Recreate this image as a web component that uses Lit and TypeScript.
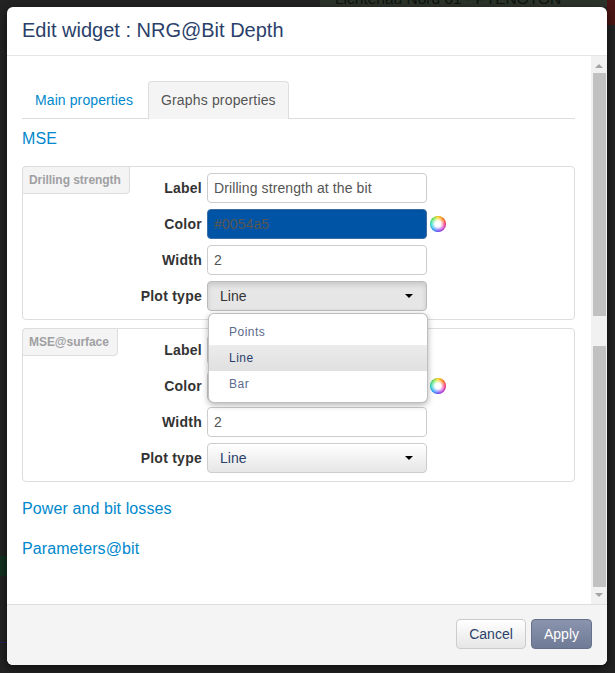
import { LitElement, html, css, nothing } from 'lit';
import { customElement } from 'lit/decorators.js';

@customElement('graph-fields')
class GraphFields extends LitElement {
    static properties = {
        legend: {},
        label: {},
        color: {},
        open: { type: Boolean },
    };
    legend = '';
    label = '';
    color = '';
    open = false;

    static styles = css`
        :host {
            display: block;
        }
        .box {
            position: relative;
            height: 146px;
            border: 1px solid #ddd;
            border-radius: 4px;
            padding: 6px 0 0 184px;
            box-sizing: content-box;
        }
        .legend {
            position: absolute;
            left: -1px;
            top: -1px;
            height: 26px;
            padding: 0 8px 0 6px;
            background: #f4f4f4;
            border: 1px solid #ddd;
            border-radius: 4px 0 4px 0;
            color: #a0a0a3;
            font-size: 12px;
            font-weight: bold;
            letter-spacing: -0.05px;
            line-height: 26px;
        }
        .row {
            display: flex;
            align-items: center;
            height: 30px;
            margin-bottom: 6px;
        }
        .row label {
            width: 110px;
            margin-left: -110px;
            padding-right: 5px;
            box-sizing: border-box;
            text-align: right;
            font-size: 14px;
            font-weight: bold;
            letter-spacing: 0.25px;
            color: #333;
        }
        .input {
            width: 220px;
            height: 30px;
            box-sizing: border-box;
            padding: 0 6px;
            border: 1px solid #ccc;
            border-radius: 4px;
            background: #fff;
            font-size: 14px;
            letter-spacing: 0.1px;
            line-height: 28px;
            color: #555;
        }
        .swatch {
            color: #5a5650;
            border-color: #3a6ea5;
            box-shadow: inset 0 1px 1px rgba(0, 0, 0, 0.08);
        }
        .wheel {
            width: 16px;
            height: 16px;
            margin-left: 3px;
            border-radius: 50%;
            background:
                radial-gradient(circle, #fff 0, #fff 25%, rgba(255, 255, 255, 0) 70%),
                conic-gradient(#ffd400, #ff6a00, #ff1f6b, #c026d3, #5b3bff, #18a0ff, #19e0c0, #4ee44e, #ffd400);
            box-shadow: inset 0 0 1px rgba(0, 0, 0, 0.4);
        }
        .select {
            display: flex;
            align-items: center;
            justify-content: space-between;
            width: 220px;
            height: 30px;
            box-sizing: border-box;
            padding: 0 13px 0 12px;
            border: 1px solid #ccc;
            border-radius: 4px;
            background: linear-gradient(#fff, #e6e6e6);
            color: #2b3f6b;
            font-size: 14px;
        }
        .select.open {
            background: #e6e6e6;
            color: #333;
            box-shadow: inset 0 3px 5px rgba(0, 0, 0, 0.125);
            border-color: #bbb;
        }
        .caret {
            width: 0;
            height: 0;
            border-left: 4px solid transparent;
            border-right: 4px solid transparent;
            border-top: 4px solid #000;
        }
        .menu {
            position: absolute;
            left: 185px;
            top: 146px;
            z-index: 5;
            width: 220px;
            height: 90px;
            box-sizing: border-box;
            padding: 5px 0;
            background: #fff;
            border: 1px solid rgba(0, 0, 0, 0.25);
            border-radius: 6px;
            box-shadow: 0 2px 6px rgba(0, 0, 0, 0.3);
            color: #5b6b8c;
            font-size: 12px;
            letter-spacing: 0.5px;
        }
        .menu div {
            height: 26px;
            padding-left: 20px;
            line-height: 27px;
        }
        .menu .active {
            background: linear-gradient(#ececec, #e0e0e0);
            color: #2b3f6b;
        }
    `;

    render() {
        return html`
            <div class="box">
                <div class="legend">${this.legend}</div>
                <div class="row"><label>Label</label><div class="input">${this.label}</div></div>
                <div class="row">
                    <label>Color</label>
                    ${this.color
                        ? html`<div class="input swatch" style="background:${this.color}">${this.color}</div>`
                        : html`<div class="input"></div>`}
                    <div class="wheel"></div>
                </div>
                <div class="row"><label>Width</label><div class="input">2</div></div>
                <div class="row">
                    <label>Plot type</label>
                    <div class="select ${this.open ? 'open' : ''}"><span>Line</span><span class="caret"></span></div>
                </div>
                ${this.open
                    ? html`<div class="menu">
                          <div>Points</div>
                          <div class="active">Line</div>
                          <div>Bar</div>
                      </div>`
                    : nothing}
            </div>
        `;
    }
}

@customElement('app-root')
export class AppRoot extends LitElement {
    static styles = css`
        :host {
            display: block;
            position: relative;
            width: 615px;
            height: 673px;
            overflow: hidden;
            box-sizing: border-box;
            padding: 7px 8px 8px 7px;
            background: #222;
            font-family: 'Liberation Sans', Arial, sans-serif;
        }
        /* page behind the dialog, only its edges show */
        .top-strip {
            position: absolute;
            left: 320px;
            top: 0;
            width: 295px;
            height: 7px;
            background: #2c332a;
        }
        .behind {
            position: absolute;
            left: 335px;
            top: -10px;
            color: #0e120e;
            font-size: 15.5px;
            white-space: nowrap;
        }
        .red {
            position: absolute;
            right: 0;
            top: 0;
            width: 8px;
            height: 25px;
            background: #4a1414;
        }
        .green {
            position: absolute;
            left: 0;
            top: 556px;
            width: 7px;
            height: 20px;
            background: #12301f;
        }
        .link {
            position: absolute;
            left: 0;
            top: 642px;
            width: 7px;
            height: 1px;
            background: #25215c;
        }
        .modal {
            position: relative;
            display: flex;
            flex-direction: column;
            height: 658px;
            background: #fff;
            border-radius: 6px;
            overflow: hidden;
            box-shadow: 0 3px 9px rgba(0, 0, 0, 0.6);
        }
        .head {
            flex: none;
            height: 49px;
            box-sizing: border-box;
            padding: 0 15px;
            border-bottom: 1px solid #e5e5e5;
            color: #2b3f6b;
            font-size: 20px;
            line-height: 47px;
        }
        .middle {
            flex: 1;
            display: flex;
            min-height: 0;
        }
        .body {
            flex: 1;
            padding: 25px 16px 0 15px;
        }
        .tabs {
            display: flex;
            height: 38px;
            box-sizing: border-box;
            border-bottom: 1px solid #ddd;
            font-size: 14px;
            letter-spacing: 0.1px;
        }
        .tab {
            padding: 0 13px;
            line-height: 38px;
            color: #0088cc;
        }
        .tab.active {
            height: 38px;
            box-sizing: border-box;
            margin-left: 2px;
            padding: 0 12px;
            background: #f4f4f4;
            border: 1px solid #ddd;
            border-bottom: none;
            border-radius: 4px 4px 0 0;
            color: #555;
            letter-spacing: 0.16px;
            line-height: 36px;
        }
        .section {
            font-size: 16px;
            letter-spacing: 0.1px;
            line-height: 20px;
            color: #0088cc;
        }
        .mse {
            margin: 10px 0 17px;
        }
        graph-fields + graph-fields {
            margin-top: 8px;
        }
        .power {
            margin: 17px 0 20px;
        }
        .scroll {
            flex: none;
            display: flex;
            flex-direction: column;
            align-items: center;
            width: 16px;
            background: #f1f1f1;
        }
        .arrow {
            flex: none;
            width: 0;
            height: 0;
            margin: 8px 0 5px;
            border-left: 4px solid transparent;
            border-right: 4px solid transparent;
            border-bottom: 4px solid #a3a3a3;
        }
        .arrow.down {
            margin: 6px 0 7px;
            border-bottom: none;
            border-top: 4px solid #a3a3a3;
        }
        .thumb {
            flex: none;
            width: 13px;
            height: 243px;
            background: #c1c1c1;
        }
        .thumb.lower {
            height: 241px;
            margin-top: 30px;
        }
        .foot {
            flex: none;
            display: flex;
            justify-content: flex-end;
            gap: 5px;
            height: 61px;
            box-sizing: border-box;
            padding: 14px 15px 0 0;
            background: #f4f4f4;
            border-top: 1px solid #ddd;
        }
        .btn {
            height: 30px;
            box-sizing: border-box;
            border-radius: 4px;
            font-size: 14px;
            line-height: 28px;
            text-align: center;
        }
        .cancel {
            width: 70px;
            border: 1px solid #ccc;
            background: linear-gradient(#fff, #e6e6e6);
            color: #2b3f6b;
        }
        .apply {
            width: 61px;
            border: 1px solid #66708a;
            background: linear-gradient(#8a94ad, #6f7a96);
            color: #fff;
        }
    `;

    render() {
        return html`
            <div class="top-strip"></div>
            <div class="behind">Lichtenau Nord 01 - PTENOTON</div>
            <div class="red"></div>
            <div class="green"></div>
            <div class="link"></div>
            <div class="modal">
                <div class="head">Edit widget : NRG@Bit Depth</div>
                <div class="middle">
                    <div class="body">
                        <div class="tabs">
                            <div class="tab">Main properties</div>
                            <div class="tab active">Graphs properties</div>
                        </div>
                        <div class="section mse">MSE</div>
                        <graph-fields legend="Drilling strength" label="Drilling strength at the bit" color="#0054a5" open></graph-fields>
                        <graph-fields legend="MSE@surface"></graph-fields>
                        <div class="section power">Power and bit losses</div>
                        <div class="section">Parameters@bit</div>
                    </div>
                    <div class="scroll">
                        <div class="arrow"></div>
                        <div class="thumb"></div>
                        <div class="thumb lower"></div>
                        <div style="flex:1"></div>
                        <div class="arrow down"></div>
                    </div>
                </div>
                <div class="foot">
                    <div class="btn cancel">Cancel</div>
                    <div class="btn apply">Apply</div>
                </div>
            </div>
        `;
    }
}
